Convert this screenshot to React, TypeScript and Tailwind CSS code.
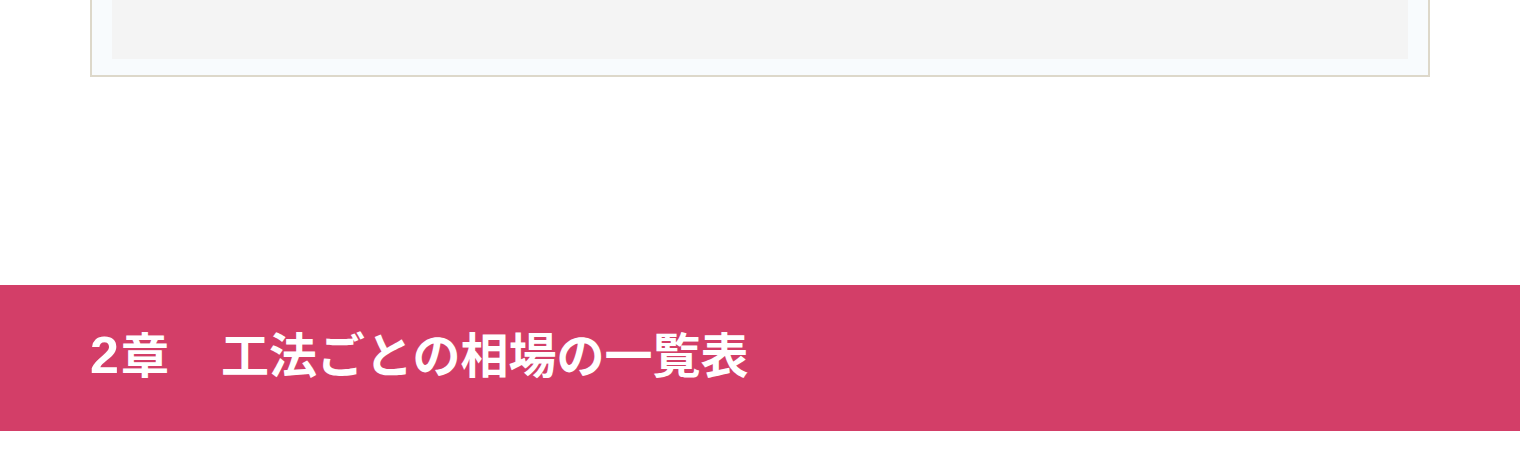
export default function App() {
  return (
    <div className="w-[1520px] h-[473px] bg-white overflow-hidden" style={{ fontFamily: '"Liberation Sans", "Noto Sans CJK JP", sans-serif' }}>
      <div className="mx-[90px] border-x-2 border-b-2 border-[#ddd8ca] bg-[#f8fbfd] px-[20px] pb-[16px]">
        <div className="h-[59px] bg-[#f4f4f4]" />
      </div>
      <div className="mt-[208px] h-[146px] bg-[#d33e68] flex items-center px-[90px] pb-[6px]">
        <h2 className="text-[48px] font-bold text-white leading-none flex items-baseline">
          <span className="text-[52px] mr-[2px]">2</span>
          <span>章</span>
          <span className="ml-[4px]">　工法ごとの相場の一覧表</span>
        </h2>
      </div>
    </div>
  );
}
